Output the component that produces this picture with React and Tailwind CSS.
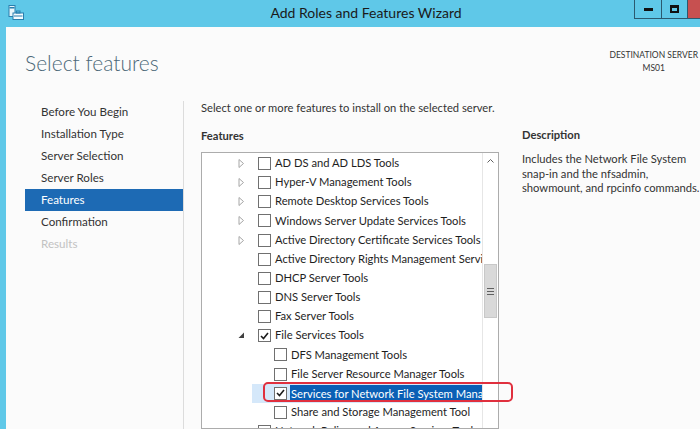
import React from 'react';

const font = { fontFamily: 'Lato, "Noto Sans", sans-serif' };

const steps = [
  { label: 'Before You Begin' },
  { label: 'Installation Type' },
  { label: 'Server Selection' },
  { label: 'Server Roles' },
  { label: 'Features', active: true },
  { label: 'Confirmation' },
  { label: 'Results', disabled: true },
];

const features = [
  { label: 'AD DS and AD LDS Tools', expander: 'closed' },
  { label: 'Hyper-V Management Tools', expander: 'closed' },
  { label: 'Remote Desktop Services Tools', expander: 'closed' },
  { label: 'Windows Server Update Services Tools', expander: 'closed' },
  { label: 'Active Directory Certificate Services Tools', expander: 'closed' },
  { label: 'Active Directory Rights Management Services Tools' },
  { label: 'DHCP Server Tools' },
  { label: 'DNS Server Tools' },
  { label: 'Fax Server Tools' },
  { label: 'File Services Tools', expander: 'open', checked: true },
  { label: 'DFS Management Tools', nested: true },
  { label: 'File Server Resource Manager Tools', nested: true },
  { label: 'Services for Network File System Management Tools', nested: true, checked: true, selected: true },
  { label: 'Share and Storage Management Tool', nested: true },
  { label: 'Network Policy and Access Services Tools' },
];

function Expander({ type }) {
  if (type === 'closed') {
    return (
      <svg width="7" height="9" viewBox="0 0 7 9">
        <path d="M1 0.5 L5.5 4.5 L1 8.5 Z" fill="none" stroke="#a6a6a6" strokeWidth="1" />
      </svg>
    );
  }
  if (type === 'open') {
    return (
      <svg width="7" height="7" viewBox="0 0 7 7">
        <path d="M6 0.5 L6 6 L0.5 6 Z" fill="#404040" />
      </svg>
    );
  }
  return null;
}

function Checkbox({ checked }) {
  return (
    <div className="w-[13px] h-[13px] border border-[#707070] bg-white flex items-center justify-center shrink-0">
      {checked && (
        <svg width="9" height="8" viewBox="0 0 9 8">
          <path d="M1 4 L3.5 6.5 L8 1" fill="none" stroke="#1c1c1c" strokeWidth="1.6" />
        </svg>
      )}
    </div>
  );
}

function FeatureRow({ item }) {
  return (
    <div className="relative h-[19.15px] flex items-center whitespace-nowrap">
      {item.selected && <div className="absolute left-[50px] right-0 top-0 bottom-0 bg-[#d5e8fa]" />}
      <div className="relative w-[56px] pl-[36px] flex items-center shrink-0">
        <Expander type={item.expander} />
      </div>
      {item.nested && <div className="w-[16px] shrink-0" />}
      <div className="relative"><Checkbox checked={item.checked} /></div>
      {item.selected ? (
        <span className="relative ml-[3px] pl-[1px] pr-[10px] bg-[#0a5fb5] text-white leading-[17px]">{item.label}</span>
      ) : (
        <span className="relative ml-[4px] text-[#1e1e1e]">{item.label}</span>
      )}
    </div>
  );
}

export default function App() {
  return (
    <div className="w-[700px] h-[429px] overflow-hidden bg-[#5fc8e8] flex flex-col text-[11.2px]" style={font}>
      {/* title bar */}
      <div className="relative h-[27px] shrink-0 flex items-center justify-center">
        <svg className="absolute left-[8px] top-[5px]" width="16" height="15" viewBox="0 0 16 15">
          <rect x="1" y="0.5" width="6" height="11" fill="#e8f6fb" stroke="#2a7fae" />
          <rect x="1.5" y="2" width="5" height="1.5" fill="#2a7fae" />
          <rect x="5" y="8" width="10.5" height="6.5" fill="#f4fbfe" stroke="#2a7fae" />
          <rect x="8.5" y="6" width="3.5" height="2" fill="none" stroke="#2a7fae" />
          <rect x="6" y="10.5" width="8.5" height="1" fill="#2a7fae" />
        </svg>
        <span className="text-[14px] text-[#1a1a1a] ml-[32px] -mt-[2px]">Add Roles and Features Wizard</span>
        <div className="absolute right-0 top-0 flex h-[19px]">
          <div className="w-[27px] border-l border-b border-[#2b5a70] flex items-center justify-center">
            <div className="w-[9px] h-[3px] bg-[#111]" />
          </div>
          <div className="w-[26px] border-l border-b border-[#2b5a70] flex items-center justify-center">
            <div className="w-[9px] h-[8px] border-2 border-t-[3px] border-[#111]" />
          </div>
          <div className="w-[13px] bg-[#c75050] border-l border-b border-[#2b5a70]" />
        </div>
      </div>

      {/* window body */}
      <div className="flex-1 ml-[6px] bg-[#fbfbfb] flex flex-col min-h-0">
        <div className="flex justify-between items-start h-[74px] shrink-0">
          <h1 className="pl-[19px] pt-[21px] text-[21px] font-light text-[#4b6878] leading-[30px]">Select features</h1>
          <div className="pt-[22px] pr-[2px] text-center text-[8.5px] leading-[13px] text-[#333]">
            <div>DESTINATION SERVER</div>
            <div>MS01</div>
          </div>
        </div>

        <div className="flex flex-1 min-h-0">
          {/* steps */}
          <div className="w-[178px] shrink-0 border-r border-[#dcdcdc] flex flex-col text-[11.6px]">
            {steps.map((s) => (
              <div
                key={s.label}
                className={
                  'ml-[19px] h-[22px] pl-[16px] flex items-center ' +
                  (s.active ? 'bg-[#1d6ab4] text-white' : s.disabled ? 'text-[#c2c2c2]' : 'text-[#333]')
                }
              >
                {s.label}
              </div>
            ))}
          </div>

          {/* main */}
          <div className="flex-1 pl-[17px] flex min-h-0">
            <div className="w-[298px] shrink-0 flex flex-col min-h-0">
              <p className="text-[#333] mt-[-2px] leading-[18px] whitespace-nowrap">Select one or more features to install on the selected server.</p>
              <h2 className="font-bold text-[#333] mt-[10px] leading-[18px]">Features</h2>
              <div className="mt-[7px] flex-1 min-h-0 border border-[#acacac] bg-white flex relative">
                <div className="flex-1 overflow-hidden pt-[1px] min-w-0">
                  {features.map((f) => (
                    <FeatureRow key={f.label} item={f} />
                  ))}
                </div>
                <div className="w-[16px] shrink-0 border-l border-[#e6e6e6] bg-white flex flex-col relative">
                  <div className="h-[16px] flex items-center justify-center">
                    <svg width="7" height="4" viewBox="0 0 7 4">
                      <path d="M0.5 3.5 L3.5 0.5 L6.5 3.5" fill="none" stroke="#606060" />
                    </svg>
                  </div>
                  <div className="h-[95px]" />
                  <div className="h-[54px] mx-[1px] bg-[#d9d9d9] border border-[#c8c8c8] flex flex-col items-center justify-center gap-[2px]">
                    <div className="w-[7px] h-[1px] bg-[#606060]" />
                    <div className="w-[7px] h-[1px] bg-[#606060]" />
                    <div className="w-[7px] h-[1px] bg-[#606060]" />
                  </div>
                </div>
                {/* red callout */}
                <div className="absolute left-[61px] top-[229px] w-[250px] h-[20px] border-2 border-[#e0303e] rounded-[5px] z-10" />
              </div>
            </div>

            {/* description */}
            <div className="pl-[23px] pr-[2px] text-[#333]">
              <h2 className="font-bold mt-[25px] leading-[18px]">Description</h2>
              <p className="mt-[8px] leading-[14.5px] whitespace-nowrap">
                Includes the Network File System<br />
                snap-in and the nfsadmin,<br />
                showmount, and rpcinfo commands.
              </p>
            </div>
          </div>
        </div>
      </div>
    </div>
  );
}
